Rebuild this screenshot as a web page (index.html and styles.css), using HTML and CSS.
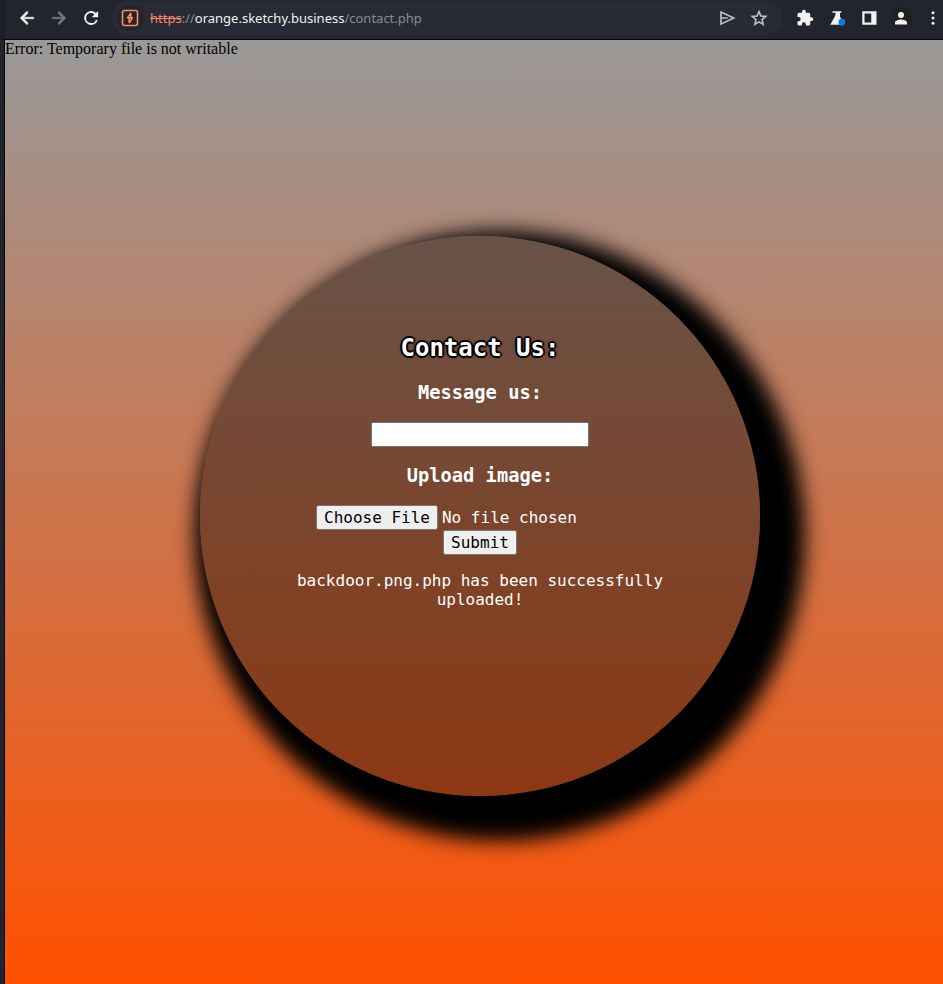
FILE: index.html
```html
<!DOCTYPE html>
<html lang="en">
<head>
<meta charset="utf-8">
<title>Contact Us</title>
<link rel="stylesheet" href="styles.css">
</head>
<body>
<header class="toolbar">
  <nav class="nav" aria-label="History">
    <button class="tool" type="button" aria-label="Back"><svg viewBox="0 0 24 24"><path d="M21 11H7.800l5.600-5.600L12 3l-9 9 9 9 1.400-2.400L7.800 13H21z" stroke="currentColor" stroke-width=".8"/></svg></button>
    <button class="tool dim" type="button" aria-label="Forward"><svg viewBox="0 0 24 24"><path d="M12 3l-1.400 2.400 5.600 5.600H3v2h13.200l-5.600 5.600L12 21l9-9z" stroke="currentColor" stroke-width=".8"/></svg></button>
    <button class="tool" type="button" aria-label="Reload"><svg viewBox="0 0 24 24" fill="none"><path d="M18.600 5.400A9.200 9.200 0 1 0 21 14.500h-2.600A6.700 6.700 0 1 1 12 5.300c1.800 0 3.400.7 4.600 1.900L13 11h8.500V2.500z"/></svg></button>
  </nav>
  <div class="address">
    <span class="badge"><svg viewBox="0 0 18 18" fill="none" stroke="currentColor"><rect x="1.500" y="1.500" width="15" height="15" rx="2" stroke-width="1.600"/><path d="M9.800 4L6.500 8.800h4.800L8.200 14M9.800 4v4.500M8.200 14V9.200" stroke-width="1.500" stroke-linejoin="round"/></svg></span>
    <a class="url" href="#"><span class="scheme">https</span>://<span class="host">orange.sketchy.business</span>/contact.php</a>
    <button class="tool soft" type="button" aria-label="Share"><svg viewBox="0 0 24 24" fill="none" stroke="currentColor" stroke-width="2.200"><path d="M4 4v16L21 12zM4 12h9"/></svg></button>
    <button class="tool soft" type="button" aria-label="Bookmark"><svg viewBox="0 0 24 24" fill="none" stroke="currentColor" stroke-width="2.200"><path d="M12 3.500l2.500 5.900 6.400.6-4.800 4.200 1.400 6.300-5.500-3.300-5.500 3.300 1.400-6.300L3.100 10l6.400-.6z"/></svg></button>
  </div>
  <div class="extensions">
    <button class="tool" type="button" aria-label="Extensions"><svg viewBox="0 0 24 24"><path d="M20.500 11H19V7a2 2 0 0 0-2-2h-4V3.500a2.500 2.500 0 0 0-5 0V5H4a2 2 0 0 0-2 2v3.800h1.500a2.700 2.700 0 0 1 0 5.400H2V20c0 1.100.9 2 2 2h3.800v-1.500a2.700 2.700 0 0 1 5.400 0V22H17a2 2 0 0 0 2-2v-4h1.500a2.500 2.500 0 0 0 0-5z"/></svg></button>
    <button class="tool" type="button" aria-label="Labs"><svg viewBox="0 0 24 24"><path d="M6 3h12v2h-2v5l5 11H3l5-9 2-4V5H6z"/><circle cx="18.500" cy="17.500" r="4.500" fill="#1a73e8"/></svg></button>
    <button class="tool" type="button" aria-label="Side panel"><svg viewBox="0 0 24 24"><path fill-rule="evenodd" d="M3 3h19v18H3zM6 6v12h9V6z"/></svg></button>
    <button class="tool profile" type="button" aria-label="Profile"><svg viewBox="0 0 24 24"><path d="M12 12a4 4 0 1 0 0-8 4 4 0 0 0 0 8zm0 2c-2.700 0-8 1.300-8 4v2.500h16V18c0-2.700-5.300-4-8-4z"/></svg></button>
    <button class="tool" type="button" aria-label="Menu"><svg viewBox="0 0 24 24"><circle cx="12" cy="5" r="2"/><circle cx="12" cy="12" r="2"/><circle cx="12" cy="19" r="2"/></svg></button>
  </div>
</header>
<main class="page">
  <div class="error">Error: Temporary file is not writable</div>
  <div class="stage">
    <form class="contact">
      <h2 class="title">Contact Us:</h2>
      <h3><label for="message">Message us:</label></h3>
      <input class="message" id="message" type="text">
      <h3><label for="image">Upload image:</label></h3>
      <input class="upload" id="image" type="file">
      <button class="submit" type="button">Submit</button>
      <p class="result">backdoor.png.php has been successfully uploaded!</p>
    </form>
  </div>
</main>
</body>
</html>
```
FILE: styles.css
```css
body {
  margin: 0;
  min-height: 100vh;
  display: flex;
  flex-direction: column;
  overflow: hidden;
  background: #21232d;
}

.toolbar {
  box-sizing: border-box;
  display: flex;
  align-items: center;
  height: 40px;
  padding: 0 0 4px 11px;
  border-bottom: 1px solid #07080c;
  border-left: 5px solid #1d1e29;
  background: #23252e;
  color: #f1f1ef;
}

.nav,
.extensions {
  display: flex;
  flex: none;
  gap: 10px;
}

.extensions {
  margin: 0 -1px 0 11px;
}

.tool {
  flex: none;
  display: grid;
  place-items: center;
  width: 22px;
  height: 22px;
  padding: 0;
  border: 0;
  border-radius: 50%;
  background: none;
  color: inherit;
}

.tool svg {
  width: 18px;
  height: 18px;
  fill: currentColor;
}

.tool.soft svg {
  fill: none;
}

.dim {
  color: #777879;
}

.soft {
  color: #bfc0c1;
}

.profile {
  background: #202124;
}

.address {
  flex: 1;
  display: flex;
  align-items: center;
  gap: 10px;
  min-width: 0;
  height: 34px;
  margin-left: 10px;
  padding: 0 13px 0 5px;
  border-radius: 17px;
  background: #282a35;
}

.badge {
  display: grid;
  place-items: center;
  width: 26px;
  height: 26px;
  margin-right: -3px;
  border-radius: 50%;
  background: #23252e;
  color: #ff8b60;
}

.badge svg {
  width: 18px;
  height: 18px;
}

.url {
  flex: 1;
  color: #8b8c91;
  font: 13px/20px "Noto Sans", sans-serif;
  text-decoration: none;
  white-space: nowrap;
}

.scheme {
  color: #f08860;
  text-decoration: line-through;
}

.host {
  color: #f1f1ef;
}

.page {
  flex: 1;
  display: flex;
  flex-direction: column;
  margin-left: 4px;
  border-left: 1px solid #07080c;
  background: linear-gradient(#999, #ff5000);
}

.error {
  color: #000;
  font: 16px/18px "Liberation Serif", serif;
}

.stage {
  flex: 1;
  display: grid;
  place-items: center;
  padding: 0 0 10px 12px;
}

.contact {
  box-sizing: border-box;
  width: min(560px, 100%);
  aspect-ratio: 1;
  padding: 78px 80px;
  border-radius: 50%;
  background: rgba(0, 0, 0, 0.4);
  box-shadow: 20px 20px 20px 25px #000;
  color: #fff;
  font: 16px "DejaVu Sans Mono", monospace;
  text-align: center;
}

.title {
  text-shadow: -2px 0 1px #000, 2px 0 1px #000, 0 -2px 1px #000, 0 2px 1px #000,
    -1px -1px 1px #000, 1px -1px 1px #000, -1px 1px 1px #000, 1px 1px 1px #000;
}

.message,
.upload,
.submit,
.upload::file-selector-button {
  font: inherit;
}

.result {
  margin: 16px 0;
}
```
